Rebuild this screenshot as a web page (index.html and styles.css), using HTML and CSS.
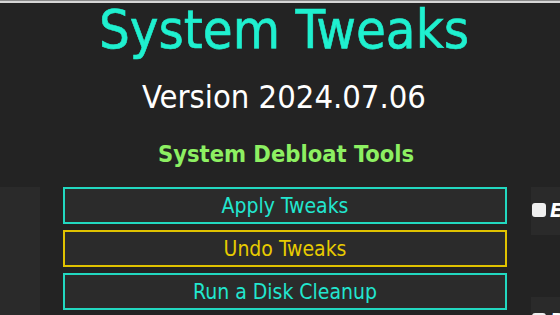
FILE: index.html
```html
<!DOCTYPE html>
<html>
<head>
<meta charset="utf-8">
<link rel="stylesheet" href="styles.css">
</head>
<body>
<div class="topline"></div>
<header class="header">
  <h1 class="title">System Tweaks</h1>
  <div class="version">Version 2024.07.06</div>
  <h2 class="section">System Debloat Tools</h2>
</header>
<main class="row">
  <aside class="side-left"></aside>
  <div class="buttons">
    <button class="btn btn-cyan">Apply Tweaks</button>
    <button class="btn btn-yellow">Undo Tweaks</button>
    <button class="btn btn-cyan">Run a Disk Cleanup</button>
  </div>
  <aside class="side-right">
    <div class="opt-card">
      <label class="opt"><span class="check"></span><span class="opt-text">Enable</span></label>
    </div>
    <div class="opt-card">
      <label class="opt"><span class="check"></span><span class="opt-text">Disable</span></label>
    </div>
  </aside>
</main>
</body>
</html>
```

FILE: styles.css
```css
html, body {
  margin: 0;
  padding: 0;
  background: #232323;
  width: 560px;
  height: 315px;
  overflow: hidden;
  font-family: "DejaVu Sans Condensed", "DejaVu Sans", Verdana, sans-serif;
}
.topline {
  height: 0;
  border-top: 1px solid #8a8a8a;
  border-bottom: 2px solid #d6d6d6;
}
.header {
  display: flex;
  flex-direction: column;
  align-items: center;
  padding-left: 8px;
}
.title {
  margin: -2px 0 0 0;
  font-weight: normal;
  font-size: 54px;
  line-height: 58px;
  color: #1ff0cf;
  -webkit-text-stroke: 0.6px #1ff0cf;
}
.version {
  margin-top: 18px;
  font-size: 32.5px;
  line-height: 40px;
  color: #ffffff;
}
.section {
  margin: 23px 0 0 4px;
  font-size: 23.5px;
  line-height: 28px;
  font-weight: bold;
  color: #8df062;
}
.row {
  display: flex;
  gap: 23px;
  margin-top: 19px;
  height: 128px;
  overflow: hidden;
}
.side-left {
  width: 40px;
  background: #2a2a2a;
}
.buttons {
  width: 444px;
  display: flex;
  flex-direction: column;
  gap: 6px;
}
.btn {
  height: 37px;
  flex: none;
  box-sizing: border-box;
  background: #2b2b2b;
  border: 2px solid #22d8c0;
  font-family: "DejaVu Sans Condensed", "DejaVu Sans", Verdana, sans-serif;
  font-size: 21px;
  color: #22e6cf;
  padding: 0;
}
.btn-yellow {
  border-color: #e0c200;
  color: #e8cc00;
}
.side-right {
  flex: 1;
  display: flex;
  flex-direction: column;
  gap: 62px;
  overflow: hidden;
  margin-left: 1px;
}
.opt-card {
  background: #2a2a2a;
  height: 48px;
  flex: none;
  padding: 11px 0 0 1px;
  box-sizing: border-box;
}
.opt {
  display: flex;
  align-items: center;
  gap: 4px;
  white-space: nowrap;
  line-height: 24px;
}
.check {
  width: 14px;
  height: 14px;
  border-radius: 3px;
  background: #f0f0f0;
  flex: none;
}
.opt-text {
  font-style: italic;
  font-weight: bold;
  font-size: 20px;
  color: #ffffff;
}
```
